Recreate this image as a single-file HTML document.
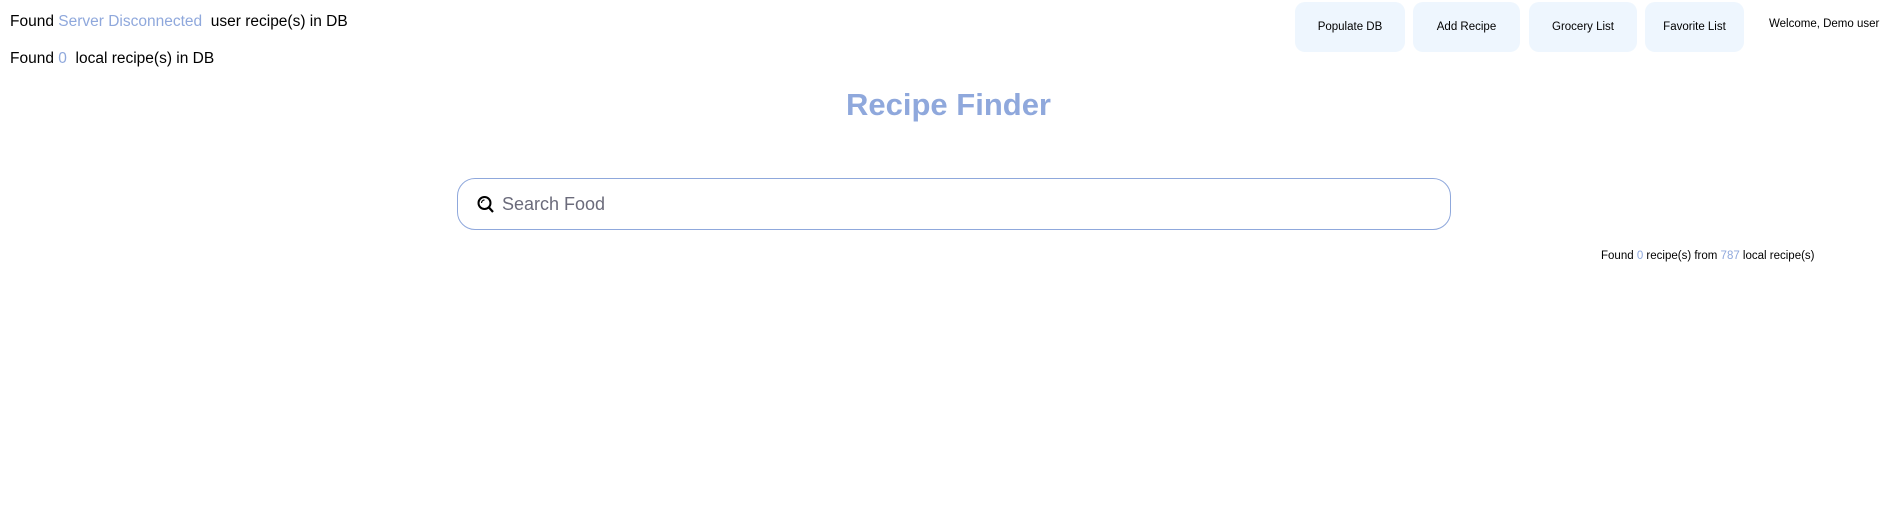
<!DOCTYPE html>
<html><head><meta charset="utf-8"><style>
body{margin:0;width:1897px;height:507px;background:#fff;font-family:"Liberation Sans",sans-serif;color:#000;position:relative;overflow:hidden}
.a{position:absolute;white-space:nowrap}
.b{color:#8fa8dc}
.btn{position:absolute;top:2px;height:50px;background:#eef6fe;border-radius:10px;font-size:11.5px;display:flex;align-items:center;justify-content:center}
</style></head><body>
<div class="a" style="left:10px;top:13px;font-size:15.5px">Found <span class="b">Server Disconnected</span>&nbsp; user recipe(s) in DB</div>
<div class="a" style="left:10px;top:50px;font-size:15.5px">Found <span class="b">0</span>&nbsp; local recipe(s) in DB</div>
<div class="btn" style="left:1295px;width:110px">Populate DB</div>
<div class="btn" style="left:1413px;width:107px">Add Recipe</div>
<div class="btn" style="left:1529px;width:108px">Grocery List</div>
<div class="btn" style="left:1645px;width:99px">Favorite List</div>
<div class="a" style="left:1769px;top:18px;font-size:11.5px">Welcome, Demo user</div>
<div class="a" style="left:0;width:1897px;text-align:center;top:87px;font-size:31px;font-weight:bold;color:#8fa8dc">Recipe Finder</div>
<div class="a" style="left:457px;top:178px;width:992px;height:50px;border:1px solid #8fa8dc;border-radius:18px"></div>
<svg class="a" style="left:476px;top:195px" width="19" height="19" viewBox="0 0 18 19"><circle cx="8" cy="8" r="6" fill="none" stroke="#000" stroke-width="2"/><path d="M12 12l4.5 5" stroke="#000" stroke-width="2.2"/><path d="M5 8a3 3 0 0 1 3-3" stroke="#000" stroke-width="1.2" fill="none"/></svg>
<div class="a" style="left:502px;top:194px;font-size:18px;color:#6b6b7b">Search Food</div>
<div class="a" style="left:1601px;top:250px;font-size:11.5px">Found <span class="b">0</span> recipe(s) from <span class="b">787</span> local recipe(s)</div>
</body></html>
